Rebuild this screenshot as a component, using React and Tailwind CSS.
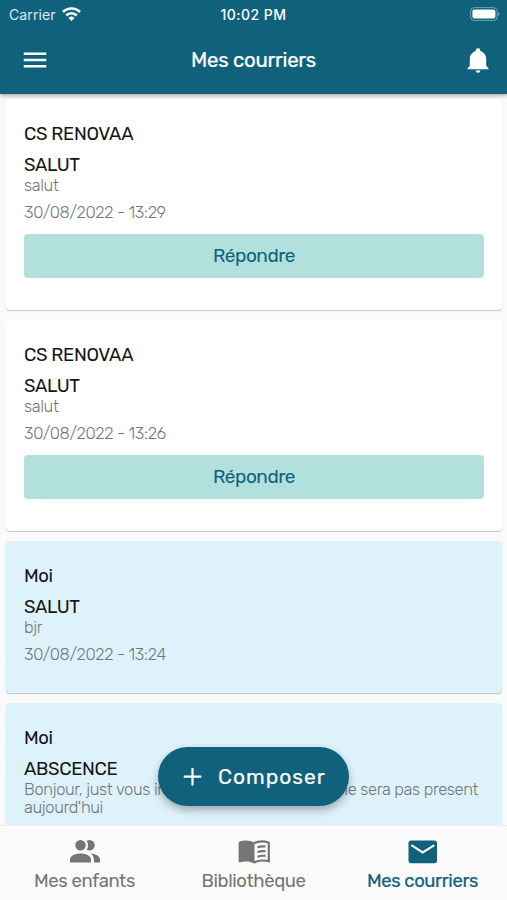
import React from 'react';
import { MdMenu } from 'react-icons/md';

const messages = [
  { id: 1, sender: 'CS RENOVAA', title: 'SALUT', body: 'salut', date: '30/08/2022 - 13:29', sent: false },
  { id: 2, sender: 'CS RENOVAA', title: 'SALUT', body: 'salut', date: '30/08/2022 - 13:26', sent: false },
  { id: 3, sender: 'Moi', title: 'SALUT', body: 'bjr', date: '30/08/2022 - 13:24', sent: true },
  {
    id: 4,
    sender: 'Moi',
    title: 'ABSCENCE',
    body: "Bonjour, just vous informer que Mohammed ne sera pas present aujourd'hui",
    sent: true,
  },
];

const PeopleIcon = () => (
  <svg width="36" height="36" viewBox="0 0 24 24" fill="currentColor">
    <path d="M16 17v2H2v-2s0-4 7-4 7 4 7 4M12.5 7.5a3.5 3.5 0 1 0-7 0 3.5 3.5 0 0 0 7 0M15.94 13A5.32 5.32 0 0 1 18 17v2h4v-2s0-3.63-6.06-4M15 4a3.39 3.39 0 0 0-1.93.59 5 5 0 0 1 0 5.82A3.39 3.39 0 0 0 15 11a3.5 3.5 0 0 0 0-7z" />
  </svg>
);

const BookIcon = () => (
  <svg width="36" height="36" viewBox="0 0 36 36" fill="none" stroke="currentColor" strokeWidth="2.2">
    <path d="M18.500 9c-2.500-2-5.500-2.600-8.500-2.600-2.200 0-4.200.3-6 1.100-.9.400-1.400 1-1.400 1.900v17.800c0 .8.600 1.300 1.500 1 1.900-.6 3.900-.8 5.900-.8 3 0 6 .6 8.500 2.200z" fill="currentColor" stroke="none" />
    <path d="M18 9.200c2.500-1.500 5.300-1.900 8.300-1.900 2 0 3.900.3 5.600.9.600.2.900.6.900 1.200v17.900c-2-.6-4.200-.8-6.500-.8-3 0-5.800.6-8.300 2" />
    <path d="M21.500 13.300c2.500-.9 5-1.200 8-.8M21.500 18c2.500-.9 5-1.200 8-.8M21.500 22.700c2.500-.9 5-1.200 8-.8" />
  </svg>
);

const MailIcon = () => (
  <svg width="36" height="36" viewBox="0 0 36 36">
    <rect x="3.5" y="6.500" width="28.500" height="22.800" rx="2.800" fill="currentColor" />
    <path d="M6.300 11.200l11.500 7.200 11.500-7.200" fill="none" stroke="#fafafa" strokeWidth="2.100" />
  </svg>
);

const BellIcon = () => (
  <svg width="28" height="28" viewBox="0 0 24 24" fill="currentColor">
    <path d="M21 19v1H3v-1l2-2v-6c0-3.100 2.030-5.830 5-6.710V4a2 2 0 0 1 4 0v.29c2.970.88 5 3.610 5 6.710v6l2 2m-7 2a2 2 0 0 1-4 0" />
  </svg>
);

const tabs = [
  { label: 'Mes enfants', icon: PeopleIcon },
  { label: 'Bibliothèque', icon: BookIcon },
  { label: 'Mes courriers', icon: MailIcon, active: true },
];

const StatusBar = () => (
  <div className="grid h-7 grid-cols-[1fr_auto_1fr] items-center pl-[9px] pr-[7px] font-['Inter',sans-serif] text-[14px]">
    <div className="flex items-center gap-1.5 text-white/85">
      <span className="tracking-[0.1px]">Carrier</span>
      <svg width="19" height="14" viewBox="0 0 19 14" fill="none" stroke="white" strokeWidth="2.6">
        <path d="M1 5a12 12 0 0 1 17 0" />
        <path d="M4.200 8.500a7.500 7.500 0 0 1 10.600 0" />
        <path d="M9.500 14 6.500 11a4.300 4.300 0 0 1 6 0z" fill="white" stroke="none" />
      </svg>
    </div>
    <span className="pr-0.5 text-center text-[14px] font-medium tracking-[0.45px]">10:02 PM</span>
    <svg className="justify-self-end" width="30" height="14" viewBox="0 0 30 14">
      <rect x="0.6" y="0.6" width="26.5" height="12.8" rx="3.6" fill="none" stroke="white" strokeOpacity="0.4" />
      <rect x="2.4" y="2.4" width="23" height="9.2" rx="2" fill="white" />
      <path d="M28.200 4.800v4.400c1.600-.8 1.600-3.600 0-4.400z" fill="white" fillOpacity="0.45" />
    </svg>
  </div>
);

const Header = () => (
  <header className="relative z-10 h-[94px] shrink-0 bg-[#10627c] text-white shadow-[0_2px_4px_rgba(0,0,0,0.3)]">
    <StatusBar />
    <div className="grid h-16 grid-cols-[1fr_auto_1fr] items-center pl-5 pr-[15px]">
      <MdMenu size={30} />
      <h1 className="pr-[5px] text-[20.5px] tracking-[-0.3px] [-webkit-text-stroke:0.2px]">Mes courriers</h1>
      <div className="justify-self-end">
        <BellIcon />
      </div>
    </div>
  </header>
);

const MessageCard = ({ message }) => (
  <article
    className={`shrink-0 rounded-[4px] px-[18px] pt-[23px] shadow-[0_1px_1px_rgba(0,0,0,0.22)] ${
      message.sent ? 'h-[152px] bg-[#def2fb]' : 'h-[211px] bg-white'
    }`}
  >
    <p className="text-[18.5px] leading-6 tracking-[-0.35px] text-[#151515]">{message.sender}</p>
    <h2 className="mt-[7px] text-[18.5px] leading-6 tracking-[-0.35px] text-[#151515]">{message.title}</h2>
    <p className="text-[16.5px] font-light leading-[18px] tracking-[-0.35px] text-[#70777a]">{message.body}</p>
    {message.date && (
      <p className="mt-[9px] text-[16.5px] font-light leading-[18px] tracking-[-0.33px] text-[#70777a]">
        {message.date}
      </p>
    )}
    {!message.sent && (
      <button
        type="button"
        className="mt-3 h-11 w-full rounded-[4px] bg-[#b2e0dc] pt-px text-[19px] tracking-[-0.45px] text-[#10627c]"
      >
        Répondre
      </button>
    )}
  </article>
);

const BottomNav = () => (
  <nav className="z-10 grid h-[75px] shrink-0 grid-cols-3 border-t border-[#eeeeee] bg-[#fafafa]">
    {tabs.map(({ label, icon: Icon, active }) => (
      <button
        key={label}
        type="button"
        className={`flex flex-col items-center pt-2 ${
          active ? 'text-[#10627c] [-webkit-text-stroke:0.2px]' : 'text-[#757575]'
        }`}
      >
        <Icon />
        <span className="-mt-px text-[18.5px] leading-6 tracking-[-0.4px]">{label}</span>
      </button>
    ))}
  </nav>
);

const App = () => {
  return (
    <div className="relative flex h-screen flex-col overflow-hidden bg-[#fafafa] font-['Rubik','Roboto',sans-serif]">
      <Header />
      <main className="flex min-h-0 flex-1 flex-col gap-2.5 overflow-hidden pl-1.5 pr-[5px] pt-[5px]">
        {messages.map((message) => (
          <MessageCard key={message.id} message={message} />
        ))}
      </main>
      <BottomNav />
      <button
        type="button"
        className="absolute bottom-[94px] left-[158px] z-20 flex h-[59px] w-[191px] items-center gap-[11px] rounded-full bg-[#10627c] pl-5 text-[21px] tracking-[1px] text-white shadow-[0_4px_8px_rgba(0,0,0,0.3)] [-webkit-text-stroke:0.2px]"
      >
        <svg width="29" height="29" viewBox="0 0 29 29" fill="none" stroke="currentColor" strokeWidth="2.2">
          <path d="M14.500 6v17.500M5.800 14.700h17.500" />
        </svg>
        Composer
      </button>
    </div>
  );
};

export default App;
